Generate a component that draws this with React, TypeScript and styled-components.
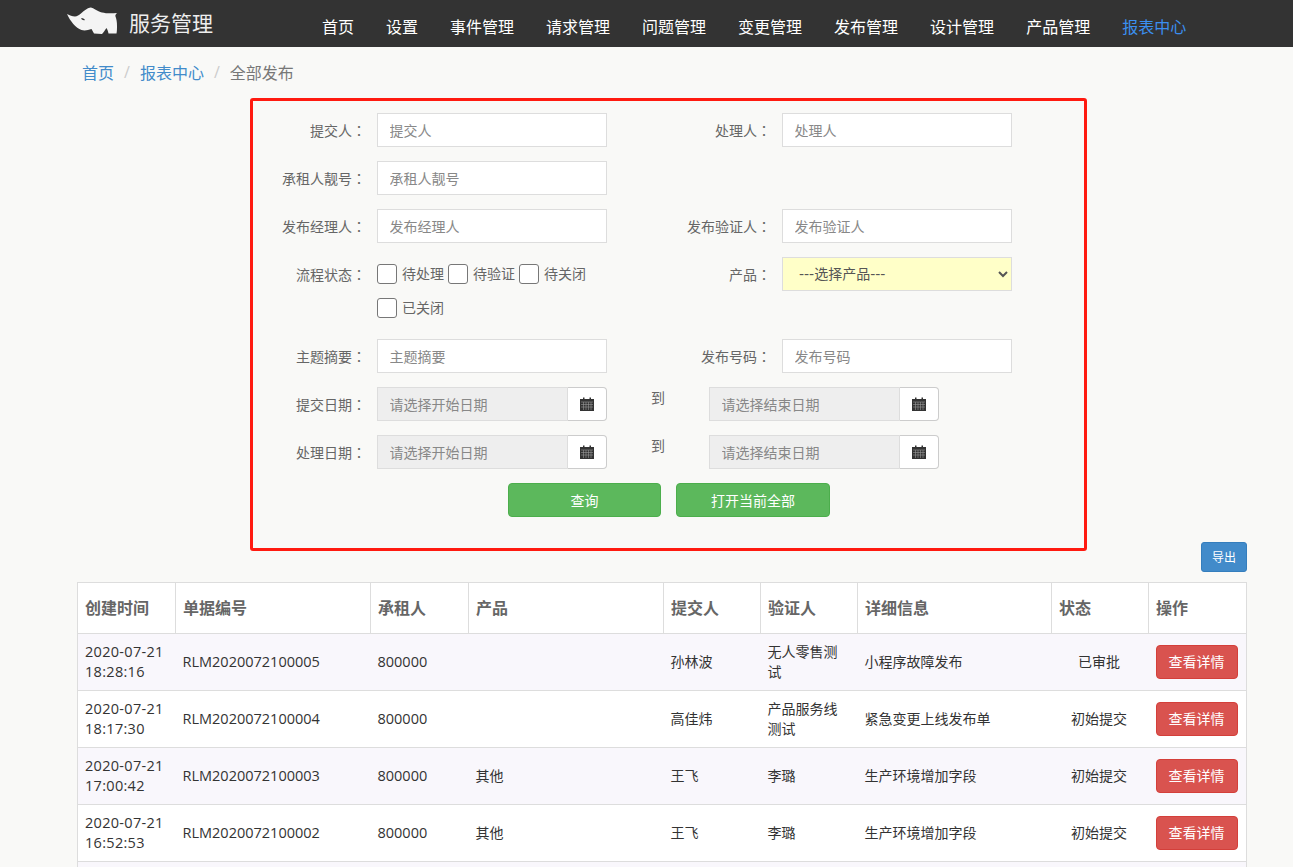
import React from 'react';
import styled, { createGlobalStyle } from 'styled-components';

const Global = createGlobalStyle`
  html, body { margin: 0; padding: 0; height: 867px; overflow: hidden; background: #f9f9f7; }
  body { font-family: "Open Sans", "Noto Sans CJK SC", sans-serif; font-size: 14px; color: #333; }
  * { box-sizing: border-box; }
  input::placeholder { color: #888; opacity: 1; }
`;

const Header = styled.header`
  height: 47px; background: #333; display: flex; align-items: center; padding-left: 66px;
`;
const Brand = styled.div`
  display: flex; align-items: center; gap: 11px; width: 240px; color: #eee; font-size: 21px; padding-bottom: 3px; flex: none;
  svg { margin-top: -3px; }
`;
const Nav = styled.nav`
  display: flex; gap: 32px; margin-left: 16px; padding-top: 4px;
`;
const NavItem = styled.a<{ $active?: boolean }>`
  font-size: 16px; color: ${p => (p.$active ? '#3b8ff0' : '#fff')}; white-space: nowrap;
`;
const Crumbs = styled.div`
  display: flex; align-items: center; height: 22px; margin: 14px 0 0 82px; font-size: 16px; color: #777;
  a { color: #428bca; }
  i { font-style: normal; color: #ccc; padding: 0 10px; }
`;
const Panel = styled.form`
  width: 837px; height: 453px; margin: 15px 0 0 250px; border: 3px solid #ff1a10; border-radius: 3px; padding: 12px 0 0 0;
  display: flex; flex-direction: column;
`;
const Row = styled.div<{ $tall?: boolean }>`
  display: flex; height: ${p => (p.$tall ? 82 : 48)}px; flex: none;
`;
const Cell = styled.div`
  display: flex; width: 405px; flex: none;
`;
const Label = styled.label`
  width: 113px; margin-right: 11px; text-align: right; line-height: 34px; font-size: 14px; color: #666; flex: none;
`;
const Colon = styled.span`
  font-family: "Noto Sans CJK TC", sans-serif;
`;
const TextInput = styled.input`
  width: 230px; height: 34px; border: 1px solid #ddd; background: #fff; padding: 0 11.5px; font: inherit; font-size: 14px; color: #555;
`;
const SelectBox = styled.select`
  width: 230px; height: 34px; border: 1px solid #ddd; background: #ffffc8; padding: 0 12px; font-family: "DejaVu Sans", "Noto Sans CJK SC", sans-serif; font-size: 14px; color: #555; border-radius: 0;
`;
const Checks = styled.div`
  width: 230px; display: flex; flex-wrap: wrap; row-gap: 14px; align-content: flex-start;
`;
const Check = styled.label`
  display: flex; align-items: center; height: 20px; margin-top: 7px; margin-right: 4px; font-size: 14px; line-height: 18px; color: #666; gap: 5px;
  &:nth-child(n+4) { margin-top: 0; }
`;
const CheckText = styled.span`
  margin-top: -1px;
`;
const Box = styled.span`
  width: 20px; height: 20px; border: 1px solid #777; border-radius: 3px; background: #fff; display: block;
`;
const DateGroup = styled.div`
  display: flex; width: 230px; height: 34px; flex: none;
`;
const DateInput = styled.input`
  width: 190px; height: 34px; border: 1px solid #ddd; border-right: 0; background: #eee; padding: 0 11.5px; font: inherit; font-size: 14px;
`;
const Addon = styled.span`
  width: 40px; height: 34px; background: #fff; border: 1px solid #ccc; border-left: 1px solid #ddd; border-radius: 0 4px 4px 0;
  display: flex; align-items: center; justify-content: center; color: #333;
`;
const To = styled.span`
  width: 58px; margin-left: -7px; padding-top: 1px; font-size: 14px; color: #666; line-height: 20px; flex: none;
`;
const Actions = styled.div`
  display: flex; gap: 15px; margin: 0 0 0 255px;
`;
const GreenBtn = styled.button<{ $w: number }>`
  width: ${p => p.$w}px; height: 34px; background: #5cb85c; border: 1px solid #4cae4c; border-radius: 4px; color: #fff; font: inherit; font-size: 14px; padding: 0;
`;
const Toolbar = styled.div`
  display: flex; justify-content: flex-end; margin: -9px 46px 0 0; height: 40px;
`;
const ExportBtn = styled.button`
  width: 46px; height: 30px; background: #428bca; border: 1px solid #357ebd; border-radius: 3px; color: #fff; font: inherit; font-size: 12px; padding: 0;
`;
const Table = styled.table`
  margin-left: 77px; width: 1169px; border-collapse: collapse; table-layout: fixed; border: 1px solid #ddd;
  th { height: 51px; border: 1px solid #ddd; background: #fff; text-align: left; padding: 0 7px 2px; font-size: 16px; font-weight: 700; color: #666; }
  td { height: 57px; border-top: 1px solid #ddd; border-bottom: 1px solid #ddd; padding: 0 7px 1px; font-size: 14px; line-height: 20px; color: #333; }
  tbody tr:nth-child(odd) td { background: #f9f7fc; }
  tbody tr:nth-child(even) td { background: #fff; }
`;
const Time = styled.td`
  && { font-size: 14.5px; letter-spacing: .3px; }
`;
const Code = styled.td`
  && { font-size: 14.5px; }
`;
const Status = styled.td`
  && { text-align: center; padding-right: 9px; }
`;
const ActionCell = styled.td`
  && { padding: 0 7px; }
`;
const DangerBtn = styled.button`
  width: 82px; height: 34px; background: #d9534f; border: 1px solid #d43f3a; border-radius: 4px; color: #fff; font: inherit; font-size: 14px; padding: 0; display: block;
`;

const Rhino = () => (
  <svg width="52" height="28" viewBox="0 0 52 28" fill="#f4f4f4">
    <path fillRule="evenodd" d="M1 7 C4 8.5 6 9.5 9 9.5 C11 9.5 13 8 15.5 6 C18 4 21 1 24.5 0.5 C28 1 31 4 36 5.5 C40 6.5 46 6.5 51 6 C49.5 7.5 49 8.5 49.5 9.5 C50.5 12 51 15 51 19 C51 22 51 24 50.5 26.5 L42.5 26.5 C42 24 41.5 22.5 40.5 21 C39 23 37.5 25.5 36 27 L28 26.5 C27 25 26.5 23.5 25.5 22 C22 23 19 24 15.5 23 C10 21 4 14 1 7 Z M15 11.5 C16.5 11 18 11.5 19 13 C17.5 13.5 16 13 15 11.5 Z" />
  </svg>
);
const Calendar = () => (
  <svg width="14" height="14" viewBox="0 0 14 14">
    <path d="M0 2 H3 V0.5 H4.5 V2 H9.5 V0.5 H11 V2 H14 V14 H0 Z" fill="#333" />
    <path d="M1 5 H13 M1 7.5 H13 M1 10 H13 M3.5 5 V13 M6 5 V13 M8.5 5 V13 M11 5 V13" stroke="#999" strokeWidth="0.6" />
  </svg>
);

const navs = ['首页', '设置', '事件管理', '请求管理', '问题管理', '变更管理', '发布管理', '设计管理', '产品管理'];
const heads: [string, number][] = [['创建时间', 98], ['单据编号', 195], ['承租人', 98], ['产品', 195], ['提交人', 97], ['验证人', 97], ['详细信息', 194], ['状态', 97], ['操作', 98]];
const rows = [
  ['2020-07-21 18:28:16', 'RLM2020072100005', '', '孙林波', '无人零售测试', '小程序故障发布', '已审批'],
  ['2020-07-21 18:17:30', 'RLM2020072100004', '', '高佳炜', '产品服务线测试', '紧急变更上线发布单', '初始提交'],
  ['2020-07-21 17:00:42', 'RLM2020072100003', '其他', '王飞', '李璐', '生产环境增加字段', '初始提交'],
  ['2020-07-21 16:52:53', 'RLM2020072100002', '其他', '王飞', '李璐', '生产环境增加字段', '初始提交'],
];

const Caption = ({ text }: { text: string }) => (
  <Label>{text}<Colon>：</Colon></Label>
);
const Field = ({ label, ph }: { label: string; ph: string }) => (
  <Cell>
    <Caption text={label} />
    <TextInput placeholder={ph} />
  </Cell>
);
const DateField = ({ ph }: { ph: string }) => (
  <DateGroup>
    <DateInput placeholder={ph} />
    <Addon><Calendar /></Addon>
  </DateGroup>
);
const DateRow = ({ label }: { label: string }) => (
  <Row>
    <Cell>
      <Caption text={label} />
      <DateField ph="请选择开始日期" />
    </Cell>
    <To>到</To>
    <DateField ph="请选择结束日期" />
  </Row>
);

export default function App() {
  return (
    <>
      <Global />
      <Header>
        <Brand><Rhino />服务管理</Brand>
        <Nav>
          {navs.map(n => <NavItem key={n}>{n}</NavItem>)}
          <NavItem $active>报表中心</NavItem>
        </Nav>
      </Header>
      <Crumbs><a>首页</a><i>/</i><a>报表中心</a><i>/</i>全部发布</Crumbs>
      <Panel>
        <Row><Field label="提交人" ph="提交人" /><Field label="处理人" ph="处理人" /></Row>
        <Row><Field label="承租人靓号" ph="承租人靓号" /></Row>
        <Row><Field label="发布经理人" ph="发布经理人" /><Field label="发布验证人" ph="发布验证人" /></Row>
        <Row $tall>
          <Cell>
            <Caption text="流程状态" />
            <Checks>
              {['待处理', '待验证', '待关闭', '已关闭'].map(c => <Check key={c}><Box /><CheckText>{c}</CheckText></Check>)}
            </Checks>
          </Cell>
          <Cell>
            <Caption text="产品" />
            <SelectBox><option>---选择产品---</option></SelectBox>
          </Cell>
        </Row>
        <Row><Field label="主题摘要" ph="主题摘要" /><Field label="发布号码" ph="发布号码" /></Row>
        <DateRow label="提交日期" />
        <DateRow label="处理日期" />
        <Actions>
          <GreenBtn type="button" $w={153}>查询</GreenBtn>
          <GreenBtn type="button" $w={154}>打开当前全部</GreenBtn>
        </Actions>
      </Panel>
      <Toolbar><ExportBtn type="button">导出</ExportBtn></Toolbar>
      <Table>
        <colgroup>{heads.map(([h, w]) => <col key={h} width={w} />)}</colgroup>
        <thead><tr>{heads.map(([h]) => <th key={h}>{h}</th>)}</tr></thead>
        <tbody>
          {rows.map(r => (
            <tr key={r[1]}>
              <Time>{r[0]}</Time>
              <Code>{r[1]}</Code>
              <Code>800000</Code>
              <td>{r[2]}</td>
              <td>{r[3]}</td>
              <td>{r[4]}</td>
              <td>{r[5]}</td>
              <Status>{r[6]}</Status>
              <ActionCell><DangerBtn type="button">查看详情</DangerBtn></ActionCell>
            </tr>
          ))}
          <tr><td colSpan={9} /></tr>
        </tbody>
      </Table>
    </>
  );
}
